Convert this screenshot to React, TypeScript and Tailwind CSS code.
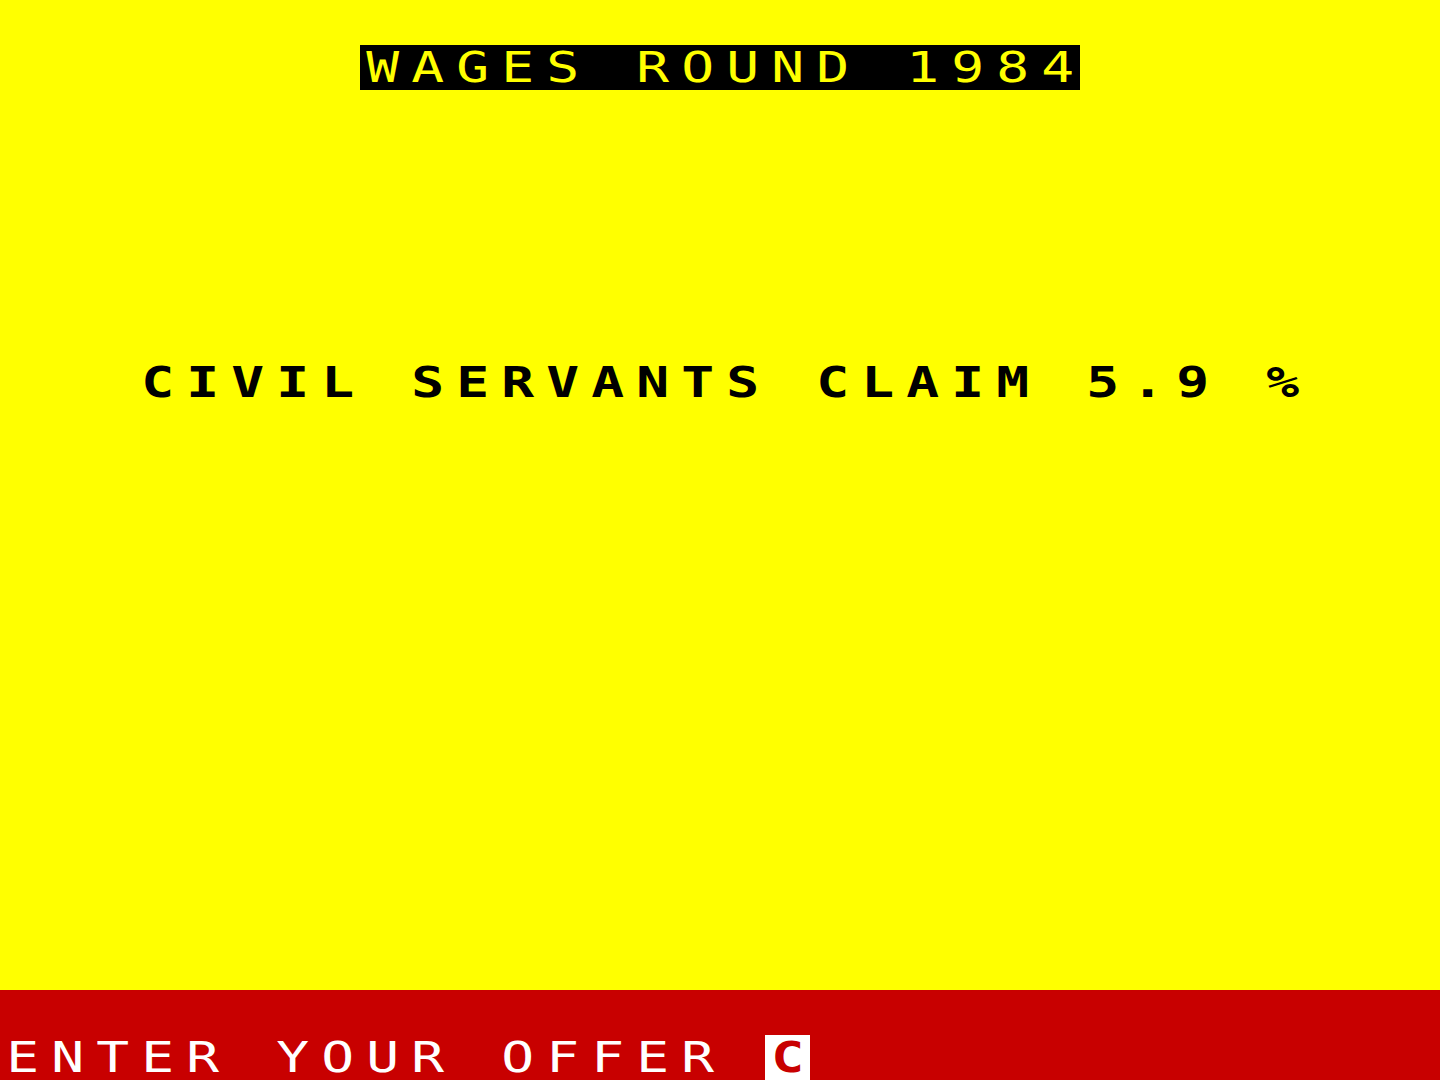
import React from 'react';

// one ZX Spectrum character cell = 8px * 5.625 = 45px
const Cells = ({ text, bold = false }: { text: string; bold?: boolean }) => (
  <>
    {text.split('').map((ch, i) => (
      <span
        key={i}
        className={`inline-flex w-[45px] h-[45px] items-center justify-center ${bold ? 'font-bold' : 'font-normal'}`}
      >
        <span className="inline-block scale-x-[1.3] leading-none text-[42px]">{ch === ' ' ? '\u00a0' : ch}</span>
      </span>
    ))}
  </>
);

const Row = ({ children, className = '' }: { children?: React.ReactNode; className?: string }) => (
  <div className={`flex h-[45px] ${className}`}>{children}</div>
);

const App: React.FC = () => {
  return (
    <div
      className="w-[1440px] h-[1080px] bg-[#ffff00] flex flex-col overflow-hidden"
      style={{ fontFamily: '"DejaVu Sans Mono", "Liberation Mono", monospace' }}
    >
      <Row />
      {/* title */}
      <Row className="pl-[360px]">
        <div className="flex bg-black text-[#ffff00]">
          <Cells text="WAGES ROUND 1984" />
        </div>
      </Row>
      <div className="h-[270px]" />
      {/* claim */}
      <Row className="pl-[135px] text-black">
        <Cells text="CIVIL SERVANTS CLAIM 5.9 %" bold />
      </Row>
      <div className="flex-1" />
      {/* input area */}
      <div className="h-[90px] bg-[#c80000] flex flex-col justify-end">
        <Row className="text-white">
          <Cells text="ENTER YOUR OFFER " />
          <span className="inline-flex w-[45px] h-[45px] items-center justify-center bg-white text-[#c80000] font-bold">
            <span className="inline-block scale-x-[1.3] leading-none text-[42px]">C</span>
          </span>
        </Row>
      </div>
    </div>
  );
};

export default App;
